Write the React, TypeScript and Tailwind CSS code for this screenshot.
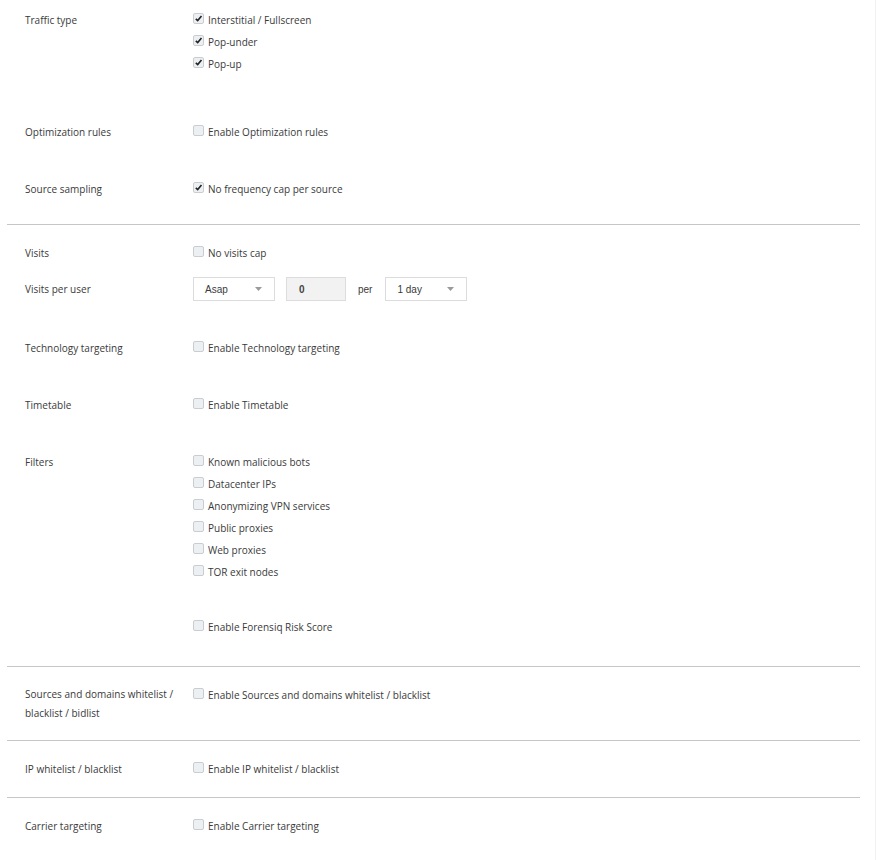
import React from "react";

const Check = ({ checked, label }: { checked?: boolean; label: string }) => (
  <div className="flex items-start h-[22px] leading-[22px]">
    <span className="mt-[4px] w-[11px] h-[11px] shrink-0 rounded-[2px] border border-[#c9cdd1] bg-[#edf0f2] flex items-center justify-center">
      {checked && (
        <svg width="9" height="9" viewBox="0 0 9 9">
          <path d="M1.8 4.8 L3.7 6.6 L7.5 2" fill="none" stroke="#222" strokeWidth="1.6" />
        </svg>
      )}
    </span>
    <span className="ml-[4px]">{label}</span>
  </div>
);

const Row = ({
  label,
  children,
  className = "",
}: {
  label: React.ReactNode;
  children: React.ReactNode;
  className?: string;
}) => (
  <div className={`flex ${className}`}>
    <div className="w-[186px] shrink-0 pl-[18px] leading-[22px]">{label}</div>
    <div className="flex flex-col">{children}</div>
  </div>
);

const Caret = () => (
  <svg width="7" height="4" viewBox="0 0 7 4">
    <path d="M0 0 L7 0 L3.5 4 Z" fill="#9a9a9a" />
  </svg>
);

export default function App() {
  return (
    <div
      className="w-[877px] h-[860px] bg-white flex text-[10px] text-[#3a3a3a]"
      style={{ fontFamily: '"Open Sans", sans-serif' }}
    >
      <div className="w-[875px] pl-[7px]">
        <div className="w-[853px]">
          {/* Section 1 */}
          <div className="pt-[9px] pb-[24px] border-b border-[#c6c6c6]">
            <Row label="Traffic type">
              <Check checked label="Interstitial / Fullscreen" />
              <Check checked label="Pop-under" />
              <Check checked label="Pop-up" />
            </Row>
            <Row label="Optimization rules" className="mt-[46px]">
              <Check label="Enable Optimization rules" />
            </Row>
            <Row label="Source sampling" className="mt-[35px]">
              <Check checked label="No frequency cap per source" />
            </Row>
          </div>

          {/* Section 2 */}
          <div className="pt-[17px] pb-[28px] border-b border-[#c6c6c6]">
            <Row label="Visits">
              <Check label="No visits cap" />
            </Row>
            <div className="flex items-center h-[24px] mt-[13px]">
              <div className="w-[186px] shrink-0 pl-[18px]">Visits per user</div>
              <div
                className="flex items-center"
                style={{ fontFamily: '"Liberation Sans", Arial, sans-serif' }}
              >
                <div className="w-[82px] h-[24px] border border-[#dcdcdc] bg-white flex items-center justify-between pl-[11px] pr-[12px]">
                  <span>Asap</span>
                  <Caret />
                </div>
                <div className="ml-[11px] w-[60px] h-[24px] border border-[#dcdcdc] bg-[#f2f2f2] flex items-center pl-[12px] font-bold text-[#444]">
                  0
                </div>
                <span className="ml-[12px]">per</span>
                <div className="ml-[13px] w-[82px] h-[24px] border border-[#dcdcdc] bg-white flex items-center justify-between pl-[11px] pr-[12px]">
                  <span>1 day</span>
                  <Caret />
                </div>
              </div>
            </div>
            <Row label="Technology targeting" className="mt-[36px]">
              <Check label="Enable Technology targeting" />
            </Row>
            <Row label="Timetable" className="mt-[35px]">
              <Check label="Enable Timetable" />
            </Row>
            <Row label="Filters" className="mt-[35px]">
              <Check label="Known malicious bots" />
              <Check label="Datacenter IPs" />
              <Check label="Anonymizing VPN services" />
              <Check label="Public proxies" />
              <Check label="Web proxies" />
              <Check label="TOR exit nodes" />
              <div className="mt-[33px]">
                <Check label="Enable Forensiq Risk Score" />
              </div>
            </Row>
          </div>

          {/* Section 3 */}
          <div className="pt-[18px] pb-[17px] border-b border-[#c6c6c6]">
            <div className="flex">
              <div className="w-[186px] shrink-0 pl-[18px] pr-[10px] leading-[19px]">
                Sources and domains whitelist /<br />blacklist / bidlist
              </div>
              <div className="flex flex-col -mt-[1px]">
                <Check label="Enable Sources and domains whitelist / blacklist" />
              </div>
            </div>
          </div>

          {/* Section 4 */}
          <div className="pt-[17px] pb-[17px] border-b border-[#c6c6c6]">
            <Row label="IP whitelist / blacklist">
              <Check label="Enable IP whitelist / blacklist" />
            </Row>
          </div>

          {/* Section 5 */}
          <div className="pt-[17px]">
            <Row label="Carrier targeting">
              <Check label="Enable Carrier targeting" />
            </Row>
          </div>
        </div>
      </div>
      <div className="w-[1px] h-full bg-[#f1f1f1]" />
    </div>
  );
}
